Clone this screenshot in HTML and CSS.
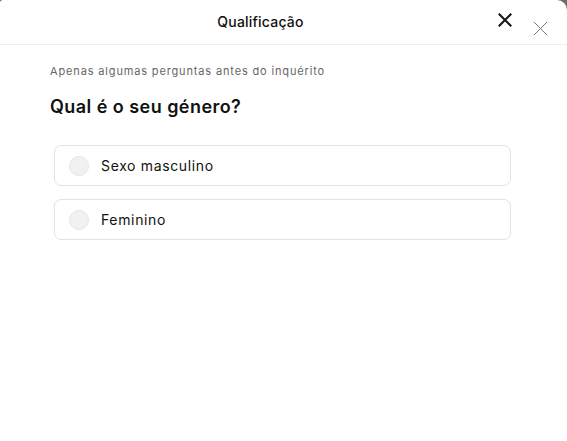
FILE: index.html
```html
<!DOCTYPE html>
<html lang="pt">
<head>
<meta charset="utf-8">
<title>Qualificação</title>
<link rel="stylesheet" href="styles.css">
</head>
<body>
<div class="modal">
  <header class="modal-header">
    <h1 class="modal-title">Qualificação</h1>
    <button class="close-btn" aria-label="Fechar">
      <svg width="14" height="14" viewBox="0 0 14 14"><path d="M1.5 1.5L12.5 12.5M12.5 1.5L1.5 12.5" stroke="#1a1a1a" stroke-width="2.2" stroke-linecap="square"/></svg>
    </button>
  </header>
  <main class="modal-body">
    <p class="subtitle">Apenas algumas perguntas antes do inquérito</p>
    <h2 class="question">Qual é o seu género?</h2>
    <div class="options">
      <label class="option"><span class="radio"></span><span class="option-text">Sexo masculino</span></label>
      <label class="option"><span class="radio"></span><span class="option-text">Feminino</span></label>
    </div>
  </main>
  <button class="outer-close" aria-label="Fechar">
    <svg width="15" height="15" viewBox="0 0 15 15"><path d="M1 1L14 14M14 1L1 14" stroke="#777" stroke-width="1"/></svg>
  </button>
</div>
</body>
</html>
```
FILE: styles.css
```css
html, body {
  margin: 0;
  padding: 0;
  background: #6b6b6b;
}
body {
  font-family: Inter, "Noto Sans", sans-serif;
  color: #111;
}
.modal {
  position: relative;
  background: #fff;
  width: 567px;
  height: 441px;
  border-radius: 3px 10px 0 0;
  overflow: hidden;
}
.modal-header {
  height: 45px;
  border-bottom: 1px solid #ececec;
  display: flex;
  align-items: center;
  justify-content: center;
  position: relative;
  box-sizing: border-box;
  padding-right: 46px;
  padding-bottom: 2px;
}
.modal-title {
  margin: 0;
  font-size: 14px;
  font-weight: 500;
  letter-spacing: 0.2px;
  color: #111;
}
.close-btn {
  position: absolute;
  left: 498px;
  top: 13px;
  width: 14px;
  height: 14px;
  padding: 0;
  border: 0;
  background: none;
  display: flex;
}
.outer-close {
  position: absolute;
  left: 533px;
  top: 21px;
  width: 15px;
  height: 15px;
  padding: 0;
  border: 0;
  background: none;
  display: flex;
}
.modal-body {
  padding: 19px 56px 0 50px;
}
.subtitle {
  margin: 0;
  font-size: 11px;
  color: #666;
  line-height: 14px;
  letter-spacing: 0.85px;
}
.question {
  margin: 17px 0 0;
  font-size: 18px;
  font-weight: 600;
  line-height: 24px;
  letter-spacing: 0.45px;
  color: #111;
}
.options {
  display: flex;
  flex-direction: column;
  gap: 13px;
  margin-top: 26px;
  padding-left: 4px;
}
.option {
  display: flex;
  align-items: center;
  gap: 12px;
  height: 41px;
  box-sizing: border-box;
  border: 1px solid #e2e2e2;
  border-radius: 7px;
  padding: 0 14px;
}
.radio {
  width: 20px;
  height: 20px;
  border-radius: 50%;
  background: #f1f1f1;
  border: 1px solid #e6e6e6;
  box-sizing: border-box;
  flex: none;
}
.option-text {
  font-size: 14px;
  letter-spacing: 0.65px;
  color: #111;
}
```
